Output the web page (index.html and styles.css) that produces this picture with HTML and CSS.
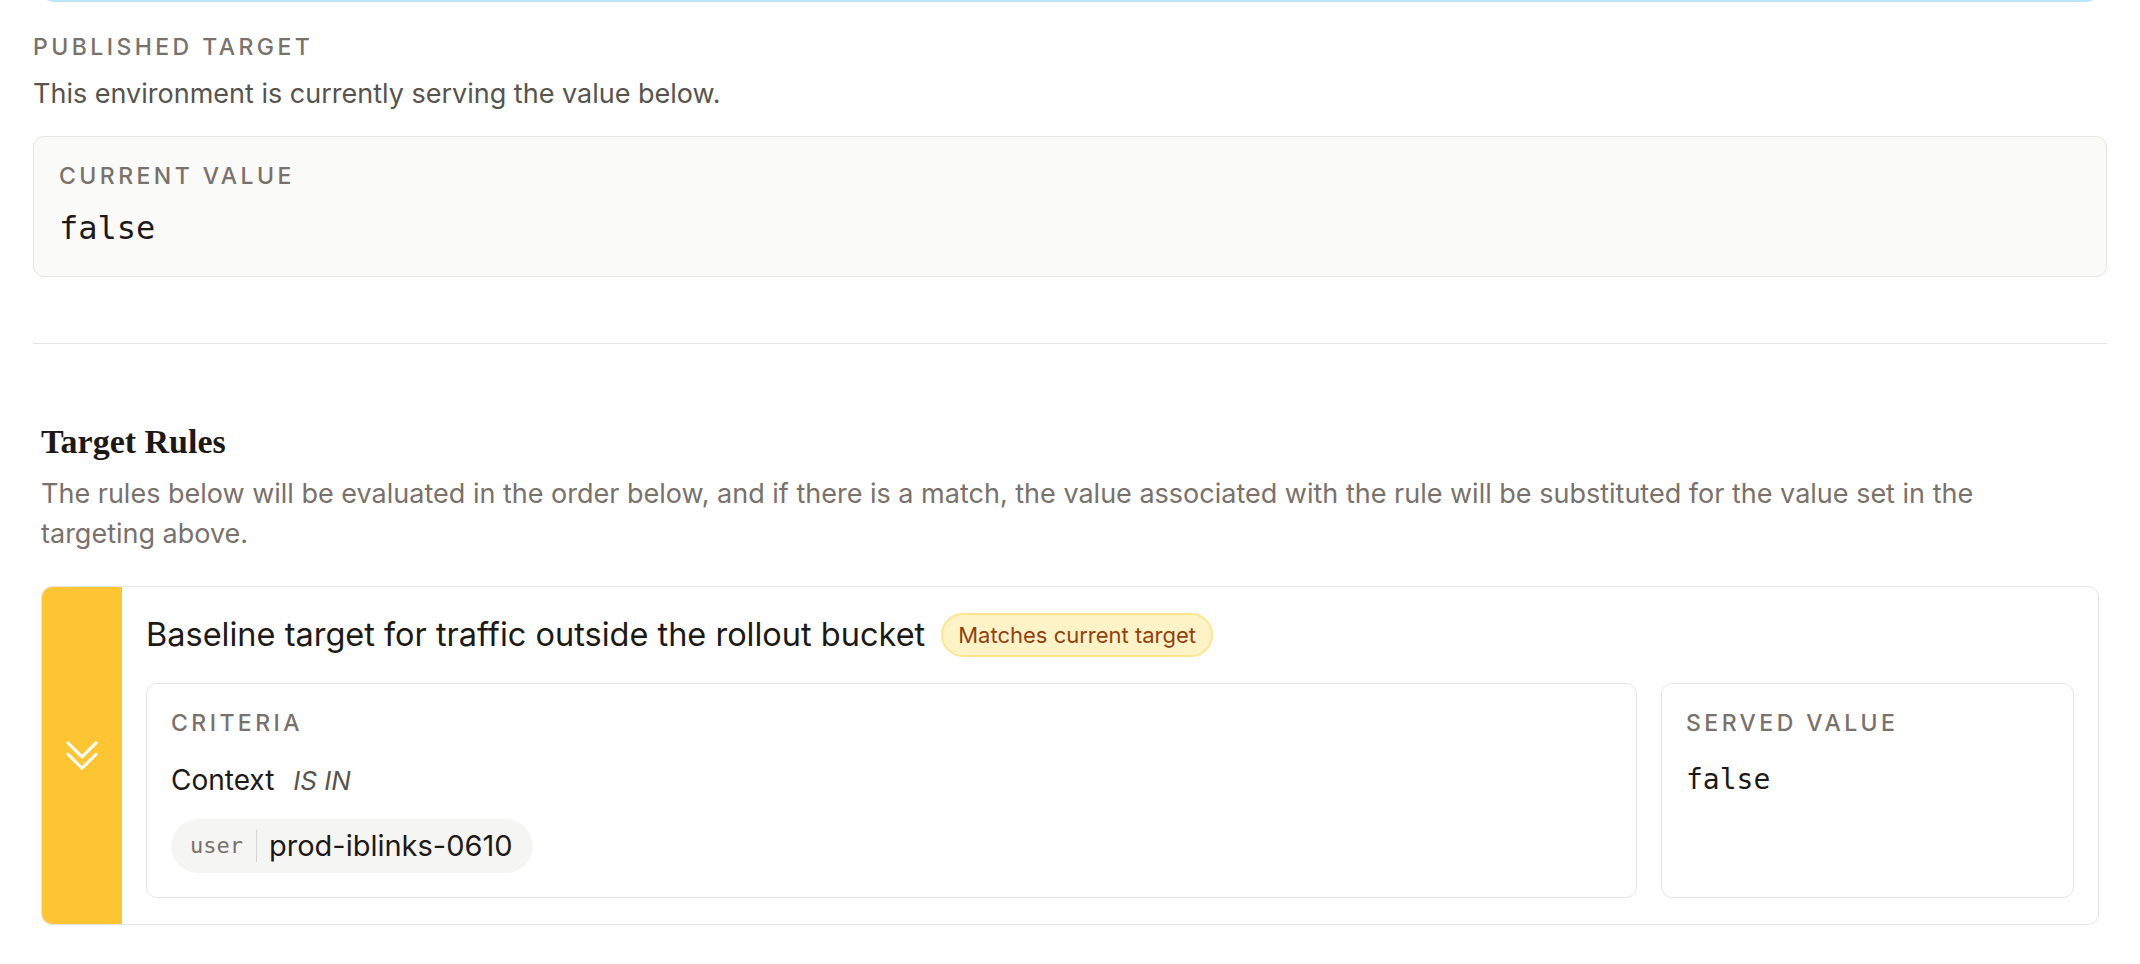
FILE: index.html
```html
<!DOCTYPE html>
<html lang="en">
<head>
<meta charset="utf-8">
<title>Flag targeting</title>
<link rel="stylesheet" href="styles.css">
</head>
<body>
<div class="page">
  <div class="prev-card"></div>

  <section class="published">
    <div class="eyebrow">Published target</div>
    <p class="lead">This environment is currently serving the value below.</p>
    <div class="value-box">
      <div class="eyebrow">Current value</div>
      <code class="value-lg">false</code>
    </div>
  </section>

  <hr class="divider">

  <section class="rules">
    <h2 class="rules-title">Target Rules</h2>
    <p class="rules-desc">The rules below will be evaluated in the order below, and if there is a match, the value associated with the rule will be substituted for the value set in the targeting above.</p>

    <article class="rule-card">
      <div class="rule-handle">
        <svg class="handle-icon" viewBox="0 0 24 24" fill="none" stroke="currentColor" stroke-width="1.8" stroke-linecap="round" stroke-linejoin="round" aria-hidden="true">
          <path d="M4 4.5 12 12.5 20 4.5M4 11 12 19 20 11"/>
        </svg>
      </div>
      <div class="rule-body">
        <div class="rule-head">
          <h3 class="rule-name">Baseline target for traffic outside the rollout bucket</h3>
          <span class="badge">Matches current target</span>
        </div>
        <div class="rule-grid">
          <div class="panel">
            <div class="eyebrow">Criteria</div>
            <div class="cond">
              <span class="cond-attr">Context</span>
              <span class="cond-op">IS IN</span>
            </div>
            <div class="chips">
              <span class="chip"><span class="chip-kind">user</span><span class="chip-val">prod-iblinks-0610</span></span>
            </div>
          </div>
          <div class="panel">
            <div class="eyebrow">Served value</div>
            <code class="value-md">false</code>
          </div>
        </div>
      </div>
    </article>
  </section>
</div>
</body>
</html>
```

FILE: styles.css
```css
* {
  box-sizing: border-box;
}

body {
  margin: 0;
  background: #ffffff;
  color: #1c1917;
  font-family: Inter, "Noto Sans", sans-serif;
}

.page {
  padding: 0 33px;
}

/* bottom edge of the card scrolled above */
.prev-card {
  height: 40px;
  margin: -38px 7px 0;
  border: 2px solid #bae6fd;
  border-radius: 14px;
}

.eyebrow {
  font-size: 23px;
  line-height: 30px;
  font-weight: 500;
  letter-spacing: 0.15em;
  text-transform: uppercase;
  color: #78716c;
}

.published > .eyebrow {
  margin-top: 30px;
}

.lead {
  margin: 12px 0 0;
  font-size: 27px;
  line-height: 40px;
  color: #57534e;
}

.value-box {
  margin-top: 22px;
  padding: 24px 25px 26px;
  background: #fafaf9;
  border: 1px solid #e7e5e4;
  border-radius: 11px;
}

.value-lg {
  display: block;
  margin-top: 15px;
  font-family: "DejaVu Sans Mono", monospace;
  font-size: 32px;
  line-height: 44px;
  color: #1c1917;
}

.divider {
  margin: 66px 0 0;
  border: 0;
  border-top: 1px solid #e7e5e4;
}

.rules {
  margin: 0 8px;
}

.rules-title {
  margin: 76px 0 0;
  font-family: "Liberation Serif", serif;
  font-size: 34px;
  line-height: 44px;
  font-weight: 600;
  color: #1c1917;
}

.rules-desc {
  margin: 10px 0 0;
  padding-right: 16px;
  font-size: 27px;
  line-height: 40px;
  color: #78716c;
}

.rule-card {
  display: flex;
  margin-top: 32px;
  border: 1px solid #e7e5e4;
  border-radius: 11px;
  overflow: hidden;
}

.rule-handle {
  flex: none;
  width: 80px;
  display: flex;
  align-items: center;
  justify-content: center;
  background: #fec532;
  color: #ffffff;
}

.handle-icon {
  width: 42px;
  height: 42px;
}

.rule-body {
  flex: 1;
  min-width: 0;
  padding: 26px 24px 26px 24px;
}

.rule-head {
  display: flex;
  align-items: center;
  gap: 16px;
  height: 44px;
}

.rule-name {
  margin: 0;
  font-size: 32.5px;
  line-height: 44px;
  font-weight: 400;
  color: #1c1917;
}

.badge {
  height: 44px;
  padding: 0 15px;
  border: 2px solid #fde68a;
  border-radius: 999px;
  background: #fef3c7;
  color: #92400e;
  font-size: 22px;
  line-height: 40px;
  white-space: nowrap;
}

.rule-grid {
  display: grid;
  grid-template-columns: minmax(0, 1fr) 413px;
  gap: 24px;
  margin-top: 26px;
}

.panel {
  padding: 24px;
  border: 1px solid #e7e5e4;
  border-radius: 11px;
  background: #ffffff;
}

.cond {
  display: flex;
  align-items: baseline;
  gap: 19px;
  margin-top: 22px;
  line-height: 40px;
}

.cond-attr {
  font-size: 28px;
  color: #1c1917;
}

.cond-op {
  font-size: 26px;
  font-style: italic;
  color: #57534e;
}

.chips {
  display: flex;
  margin-top: 18px;
}

.chip {
  display: inline-flex;
  align-items: center;
  height: 54px;
  padding: 0 20px 0 19px;
  border-radius: 999px;
  background: #f5f5f4;
}

.chip-kind {
  padding-right: 13px;
  border-right: 1px solid #d6d3d1;
  font-family: "DejaVu Sans Mono", monospace;
  font-size: 22px;
  line-height: 32px;
  color: #78716c;
}

.chip-val {
  padding-left: 12px;
  font-size: 29px;
  line-height: 40px;
  color: #1c1917;
}

.value-md {
  display: block;
  margin-top: 22px;
  font-family: "DejaVu Sans Mono", monospace;
  font-size: 28px;
  line-height: 40px;
  color: #1c1917;
}
```
